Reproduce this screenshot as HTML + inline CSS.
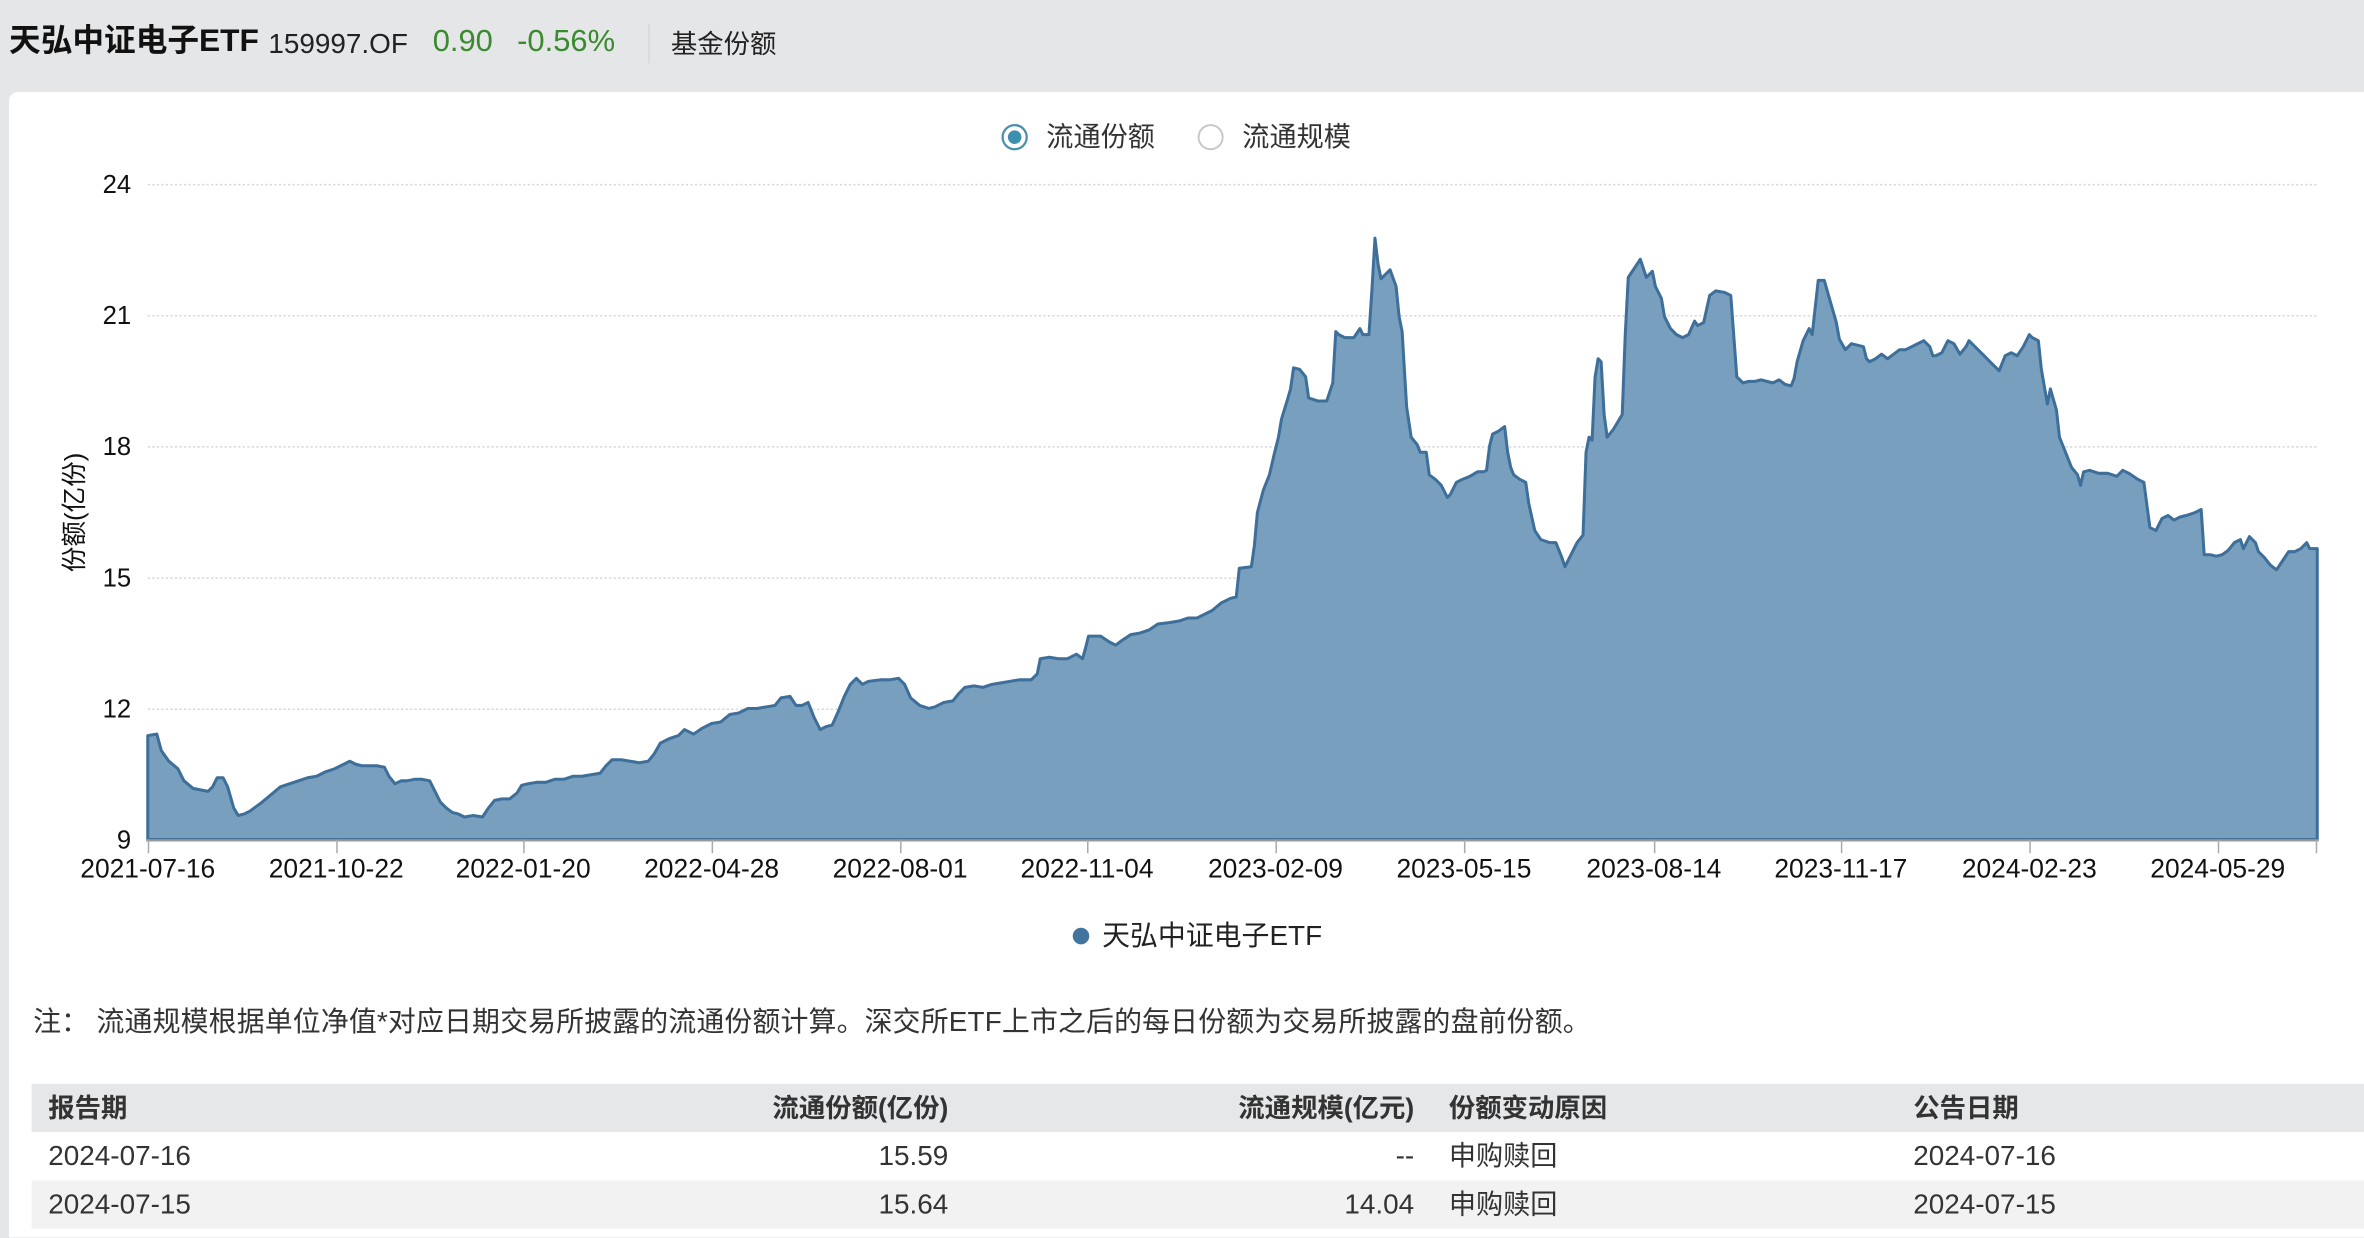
<!DOCTYPE html>
<html><head><meta charset="utf-8">
<style>
html,body{margin:0;padding:0;background:#e5e6e8;overflow:hidden}
body{width:2364px;height:1230px}
#w{position:absolute;left:0;top:0;width:1568px;height:816px;transform:scale(1.50765,1.50735);transform-origin:0 0;font-family:"Liberation Sans","Noto Sans CJK SC",sans-serif;color:#222}
.a{position:absolute;white-space:nowrap;line-height:20px}
#card{position:absolute;left:6px;top:61px;width:1570px;height:760px;background:#fff;border-radius:6px 0 0 0}
.hd{position:absolute;left:21px;top:719px;width:1560px;height:32px;background:#e6e7e9}
.r2{position:absolute;left:21px;top:783px;width:1560px;height:32px;background:#f2f2f2}
.th{font-size:17.5px;font-weight:bold;color:#333}
.td{font-size:18.5px;color:#333}
</style></head><body><div id="w">
<div class="a" style="left:6px;top:18px;font-size:21px;font-weight:bold;color:#111">天弘中证电子ETF</div>
<div class="a" style="left:178px;top:19px;font-size:18.5px;color:#222">159997.OF</div>
<div class="a" style="left:287px;top:18px;font-size:20.5px;color:#3a8a2e">0.90</div>
<div class="a" style="left:343px;top:18px;font-size:20.5px;color:#3a8a2e">-0.56%</div>
<div class="a" style="left:430px;top:16px;width:1px;height:26px;background:#d6d7d9"></div>
<div class="a" style="left:445px;top:19px;font-size:17.5px;color:#222">基金份额</div>
<div id="card"></div>
<svg class="a" style="left:0;top:0" width="1568" height="816" viewBox="0 0 1568 816">
<circle cx="673" cy="91" r="8" fill="#fff" stroke="#4a90ad" stroke-width="1.5"/>
<circle cx="673" cy="91" r="4.5" fill="#3d8fb0"/>
<circle cx="803" cy="91" r="8" fill="#fff" stroke="#c8c8c8" stroke-width="1.3"/>
<g stroke="#d8d8d8" stroke-width="1" stroke-dasharray="1.5 1.5">
<line x1="98" y1="122.5" x2="1537" y2="122.5"/><line x1="98" y1="209.5" x2="1537" y2="209.5"/><line x1="98" y1="296.5" x2="1537" y2="296.5"/><line x1="98" y1="383.5" x2="1537" y2="383.5"/><line x1="98" y1="470.5" x2="1537" y2="470.5"/>
</g>
<path fill="#789fbd" stroke="#3d6f9a" stroke-width="2" stroke-linejoin="round" d="M98,557 L98,488 104,487 107,498 112,505 118,510 122,518 128,523 133,524 138,525 141,522 144,516 148,516 151,522 155,536 158,541 162,540 166,538 170,535 174,532 180,527 186,522 192,520 198,518 204,516 210,515 216,512 222,510 228,507 232,505 236,507 240,508 245,508 250,508 255,509 258,515 262,520 266,518 270,518 275,517 280,517 285,518 288,524 292,532 296,536 300,539 304,540 308,542 314,541 320,542 324,536 328,531 333,530 338,530 343,526 346,521 350,520 356,519 362,519 368,517 374,517 380,515 386,515 392,514 398,513 402,508 406,504 412,504 418,505 424,506 430,505 434,500 438,493 444,490 450,488 454,484 460,487 466,483 472,480 478,479 484,474 490,473 496,470 502,470 508,469 514,468 518,463 524,462 528,468 532,468 536,466 540,476 544,484 548,482 552,481 556,472 560,462 564,454 568,450 572,454 576,452 584,451 590,451 596,450 600,454 604,463 610,468 616,470 620,469 626,466 632,465 636,460 640,456 646,455 652,456 658,454 664,453 670,452 676,451 684,451 688,447 690,437 696,436 702,437 708,437 714,434 718,437 720,430 722,422 730,422 736,426 740,428 744,425 750,421 756,420 762,418 768,414 776,413 782,412 788,410 794,410 800,407 804,405 810,400 816,397 820,396 822,377 830,376 832,362 834,340 838,325 842,315 845,302 848,290 850,278 854,265 856,258 858,244 862,245 866,250 868,264 874,266 880,266 884,254 886,220 888,222 892,224 898,224 902,218 904,222 908,222 910,192 912,158 914,175 916,185 918,183 922,179 926,190 928,210 930,220 933,270 936,290 940,295 942,300 946,300 948,315 952,318 956,322 960,330 962,328 966,320 970,318 975,316 980,313 984,313 986,312 988,296 990,288 994,286 998,283 1000,300 1002,310 1004,315 1008,318 1012,320 1014,334 1018,352 1022,358 1028,360 1032,360 1036,370 1038,376 1040,372 1042,368 1046,360 1050,355 1052,300 1054,290 1056,292 1058,250 1060,238 1062,240 1064,275 1066,290 1070,285 1076,275 1078,222 1080,184 1084,178 1088,172 1090,178 1092,184 1096,180 1098,190 1102,198 1104,210 1108,218 1112,222 1116,224 1120,222 1124,213 1126,216 1130,214 1134,196 1138,193 1144,194 1148,196 1152,250 1156,254 1160,253 1164,253 1168,252 1172,253 1176,254 1180,252 1184,255 1188,256 1190,251 1192,240 1196,226 1200,218 1202,222 1206,186 1210,186 1212,193 1218,214 1220,225 1224,232 1228,228 1232,229 1236,230 1238,238 1240,240 1244,238 1248,235 1252,238 1256,235 1260,232 1264,232 1268,230 1272,228 1276,226 1280,230 1282,236 1284,236 1288,234 1292,226 1296,228 1300,235 1304,230 1306,226 1310,230 1316,236 1320,240 1326,246 1330,236 1334,234 1338,236 1342,230 1346,222 1348,224 1352,226 1354,245 1358,268 1360,258 1364,272 1366,290 1370,300 1374,310 1378,315 1380,322 1382,313 1386,312 1392,314 1398,314 1404,316 1408,312 1412,314 1418,318 1422,320 1424,335 1426,350 1430,352 1434,344 1438,342 1442,345 1446,343 1450,342 1456,340 1460,338 1462,368 1466,368 1470,369 1474,368 1478,365 1482,360 1486,358 1488,364 1492,356 1496,360 1498,366 1502,370 1506,375 1510,378 1514,372 1518,366 1522,366 1526,364 1530,360 1532,364 1537,364 L1537,557 Z"/>
<line x1="97" y1="557.5" x2="1538" y2="557.5" stroke="#999" stroke-width="1.5"/>
<g stroke="#aaa" stroke-width="1">
<line x1="98.5" y1="557" x2="98.5" y2="566"/><line x1="223.5" y1="557" x2="223.5" y2="566"/><line x1="347.5" y1="557" x2="347.5" y2="566"/><line x1="472.5" y1="557" x2="472.5" y2="566"/><line x1="597.5" y1="557" x2="597.5" y2="566"/><line x1="721.5" y1="557" x2="721.5" y2="566"/><line x1="846.5" y1="557" x2="846.5" y2="566"/><line x1="971.5" y1="557" x2="971.5" y2="566"/><line x1="1097.5" y1="557" x2="1097.5" y2="566"/><line x1="1221.5" y1="557" x2="1221.5" y2="566"/><line x1="1346.5" y1="557" x2="1346.5" y2="566"/><line x1="1471.5" y1="557" x2="1471.5" y2="566"/><line x1="1536.5" y1="557" x2="1536.5" y2="566"/>
</g>
<g font-family="Liberation Sans, sans-serif" font-size="17" fill="#111" text-anchor="end">
<text x="87" y="128">24</text><text x="87" y="215">21</text><text x="87" y="302">18</text><text x="87" y="389">15</text><text x="87" y="476">12</text><text x="87" y="563">9</text>
</g>
<g font-family="Liberation Sans, sans-serif" font-size="17.5" fill="#111" text-anchor="middle">
<text x="98" y="582">2021-07-16</text><text x="223" y="582">2021-10-22</text><text x="347" y="582">2022-01-20</text><text x="472" y="582">2022-04-28</text><text x="597" y="582">2022-08-01</text><text x="721" y="582">2022-11-04</text><text x="846" y="582">2023-02-09</text><text x="971" y="582">2023-05-15</text><text x="1097" y="582">2023-08-14</text><text x="1221" y="582">2023-11-17</text><text x="1346" y="582">2024-02-23</text><text x="1471" y="582">2024-05-29</text>
</g>
<text transform="translate(55,340) rotate(-90)" text-anchor="middle" font-family="Liberation Sans, Noto Sans CJK SC, sans-serif" font-size="17" fill="#111">份额(亿份)</text>
<circle cx="717" cy="621" r="5.5" fill="#41759f"/>
</svg>
<div class="a" style="left:694px;top:81px;font-size:18px;color:#333">流通份额</div>
<div class="a" style="left:824px;top:81px;font-size:18px;color:#333">流通规模</div>
<div class="a" style="left:731px;top:611px;font-size:18.5px;color:#222">天弘中证电子ETF</div>
<div class="a" style="left:22px;top:668px;font-size:18.5px;color:#333">注：</div>
<div class="a" style="left:64px;top:668px;font-size:18.5px;color:#333;letter-spacing:0.1px">流通规模根据单位净值*对应日期交易所披露的流通份额计算。深交所ETF上市之后的每日份额为交易所披露的盘前份额。</div>
<div class="hd"></div><div class="r2"></div>
<div class="a th" style="left:32px;top:725px">报告期</div>
<div class="a th" style="right:939px;top:725px">流通份额(亿份)</div>
<div class="a th" style="right:630px;top:725px">流通规模(亿元)</div>
<div class="a th" style="left:961px;top:725px">份额变动原因</div>
<div class="a th" style="left:1269px;top:725px">公告日期</div>
<div class="a td" style="left:32px;top:757px">2024-07-16</div>
<div class="a td" style="right:939px;top:757px">15.59</div>
<div class="a td" style="right:630px;top:757px">--</div>
<div class="a td" style="left:961px;top:757px;font-size:18px">申购赎回</div>
<div class="a td" style="left:1269px;top:757px">2024-07-16</div>
<div class="a td" style="left:32px;top:789px">2024-07-15</div>
<div class="a td" style="right:939px;top:789px">15.64</div>
<div class="a td" style="right:630px;top:789px">14.04</div>
<div class="a td" style="left:961px;top:789px;font-size:18px">申购赎回</div>
<div class="a td" style="left:1269px;top:789px">2024-07-15</div>
</div></body></html>
